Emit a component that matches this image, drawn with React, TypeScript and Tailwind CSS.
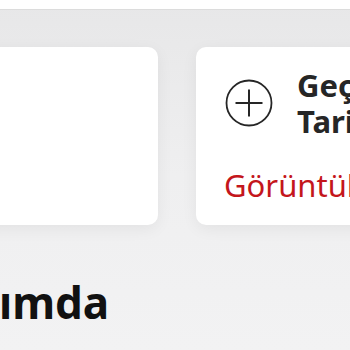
export default function App() {
    return (
        <div
            className="w-[350px] h-[350px] overflow-hidden bg-gradient-to-b from-[#e7e7e8] via-[#efeff0] to-[#f2f2f3]"
            style={{ fontFamily: '"Noto Sans", "Open Sans", sans-serif' }}
        >
            {/* Top bar */}
            <div className="h-[10px] bg-white border-b border-[#dcdcdc]" />

            {/* Cards row */}
            <div className="flex gap-[38px] -ml-[42px] mt-[37px]">
                <div className="w-[200px] h-[178px] shrink-0 rounded-[10px] bg-white shadow-[0_4px_16px_rgba(0,0,0,0.06)]" />

                <div className="w-[220px] h-[178px] shrink-0 rounded-[10px] bg-white shadow-[0_4px_16px_rgba(0,0,0,0.06)] pl-[28px] pt-[20px] overflow-hidden">
                    <div className="flex items-center gap-[23px]">
                        <svg width="50" height="50" viewBox="0 0 50 50" className="shrink-0">
                            <circle cx="25" cy="25" r="22.5" fill="none" stroke="#262626" strokeWidth="1.8" />
                            <path d="M11.5 25h27M25 11.5v27" stroke="#262626" strokeWidth="2" />
                        </svg>
                        <div className="text-[31px] leading-[36px] font-bold text-[#262626] whitespace-nowrap">
                            <div>Geçmiş</div>
                            <div>Tarihler</div>
                        </div>
                    </div>
                    <div className="mt-[31px] text-[31px] leading-none text-[#c4161c] whitespace-nowrap">
                        Görüntüle
                    </div>
                </div>
            </div>

            {/* Section title */}
            <h2 className="mt-[55px] -ml-[1px] text-[44px] leading-none font-bold text-[#111] whitespace-nowrap">
                ımda
            </h2>
        </div>
    );
}
